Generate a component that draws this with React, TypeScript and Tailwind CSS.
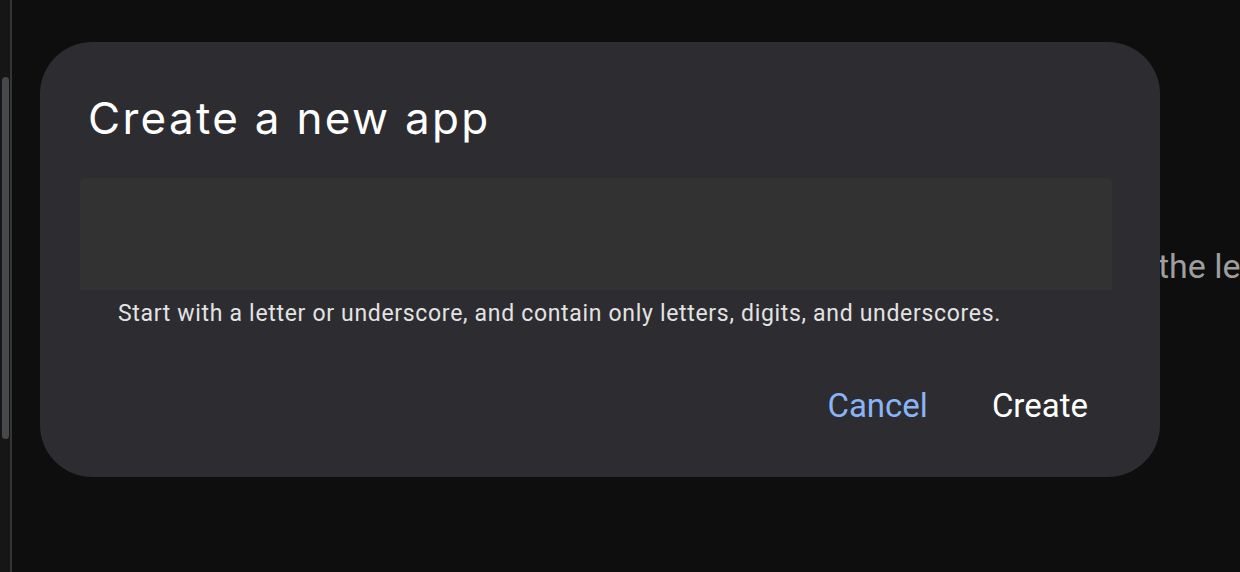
import React from 'react';

// Create-app dialog over a dark page

export default function App() {
  return (
    <div className="relative flex h-[572px] w-[1240px] overflow-hidden bg-[#0e0e0e] font-['Roboto',sans-serif]">
      {/* Left gutter with scrollbar */}
      <div className="flex h-full w-[10px] shrink-0 justify-center bg-[#161616] pt-[77px]">
        <div className="h-[362px] w-[7px] rounded-full bg-[#47484c]" />
      </div>
      <div className="h-full w-[2px] shrink-0 bg-[#343434]" />

      {/* Page content behind the dialog */}
      <div className="flex flex-1 items-start justify-end pt-[242px]">
        <p className="whitespace-nowrap pl-[1146px] text-[34px] leading-[48px] text-[#9e9e9e]">the left</p>
      </div>

      {/* Dialog */}
      <div className="absolute left-[40px] top-[42px] flex h-[435px] w-[1120px] flex-col rounded-[52px] bg-[#2c2c31] pl-[40px] pr-[48px] pt-[46px]">
        <h1 className="pl-[8px] font-['Inter',sans-serif] text-[44px] leading-[60px] tracking-[2.3px] text-white">
          Create a new app
        </h1>
        <div className="mt-[30px] h-[112px] w-full rounded-t-[4px] bg-[#323232]" />
        <p className="mt-[9px] pl-[38px] text-[23px] leading-[30px] tracking-[0.68px] text-[#e3e3e3]">
          Start with a letter or underscore, and contain only letters, digits, and underscores.
        </p>
        <div className="mt-[55px] flex justify-end gap-[64px] pr-[24px]">
          <button type="button" className="text-[33px] leading-[44px] text-[#8ab4f8]">
            Cancel
          </button>
          <button type="button" className="text-[33px] leading-[44px] text-white">
            Create
          </button>
        </div>
      </div>
    </div>
  );
}
